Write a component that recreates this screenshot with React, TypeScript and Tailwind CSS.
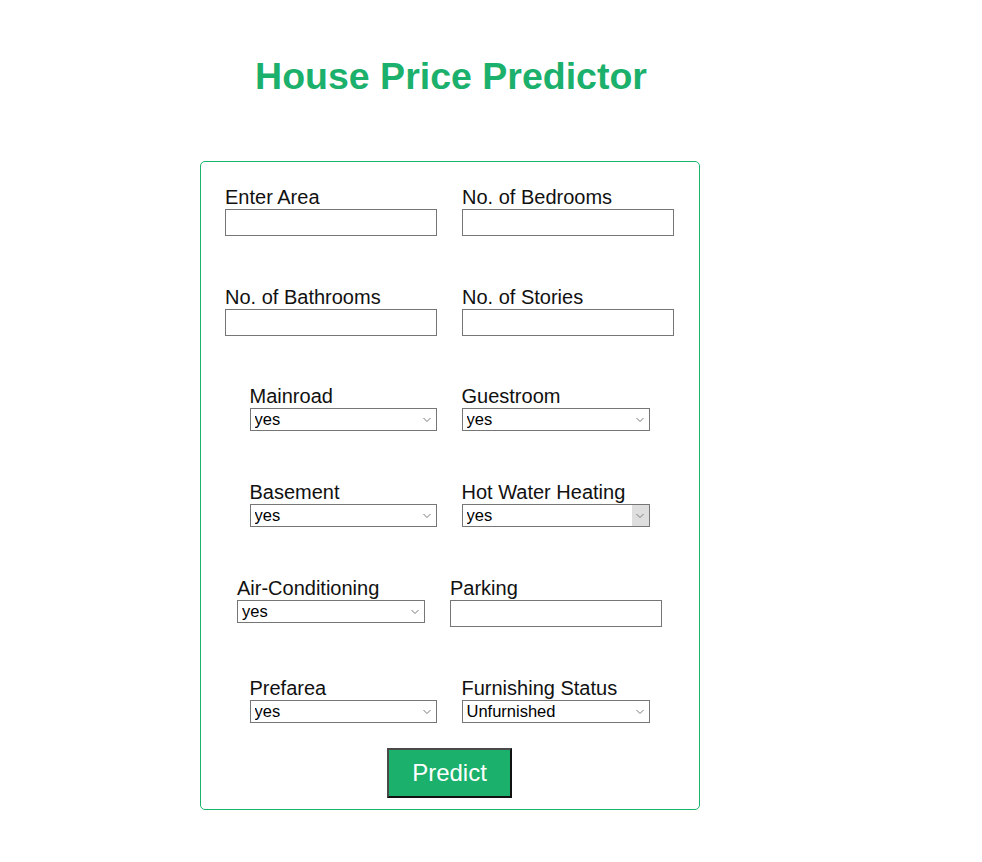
import React from 'react'

const Chevron = () => (
  <svg width="8" height="5" viewBox="0 0 8 5" className="absolute right-[6px] top-1/2 -translate-y-1/2 pointer-events-none">
    <path d="M0.5 0.5 L4 4 L7.5 0.5" fill="none" stroke="#7a7a7a" strokeWidth="1" />
  </svg>
)

const TextField = ({ label }: { label: string }) => (
  <div className="flex flex-col w-[212px]">
    <label className="text-[20px] leading-[23px] text-[#111]">{label}</label>
    <input type="text" className="h-[27px] w-[212px] border border-[#767676] bg-white outline-none" />
  </div>
)

const SelectField = ({
  label,
  options,
  width,
  hover,
}: {
  label: string
  options: string[]
  width: string
  hover?: boolean
}) => (
  <div className={`flex flex-col ${width}`}>
    <label className="text-[20px] leading-[23px] text-[#111]">{label}</label>
    <div className="relative h-[23px]">
      <select className="appearance-none h-[23px] w-full border border-[#767676] bg-white pl-[4px] text-[16.5px] leading-[21px] text-black outline-none">
        {options.map((o) => (
          <option key={o} value={o}>
            {o}
          </option>
        ))}
      </select>
      {hover && <div className="absolute right-px top-px bottom-px w-[17px] bg-[#dedede] pointer-events-none" />}
      <Chevron />
    </div>
  </div>
)

const yesNo = ['yes', 'no']

export default function App() {
  return (
    <div className="min-h-screen bg-white" style={{ fontFamily: '"Liberation Sans", Arial, sans-serif' }}>
      <div className="ml-[200px] w-[500px]">
        <h1 className="pt-[55px] pl-[2px] h-[97px] text-center text-[37.5px] leading-[42px] font-bold text-[#1bb06b]">
          House Price Predictor
        </h1>
        <form
          className="mt-[64px] rounded-[5px] border border-[#1ab36b] pt-[24px] pb-[11px] pr-[1px] flex flex-col"
          onSubmit={(e) => e.preventDefault()}
        >
          <div className="flex justify-center gap-[25px] mb-[50px]">
            <TextField label="Enter Area" />
            <TextField label="No. of Bedrooms" />
          </div>
          <div className="flex justify-center gap-[25px] mb-[49px]">
            <TextField label="No. of Bathrooms" />
            <TextField label="No. of Stories" />
          </div>
          <div className="flex justify-center gap-[25px] mb-[50px]">
            <SelectField label="Mainroad" options={yesNo} width="w-[187px]" />
            <SelectField label="Guestroom" options={yesNo} width="w-[188px]" />
          </div>
          <div className="flex justify-center gap-[25px] mb-[50px]">
            <SelectField label="Basement" options={yesNo} width="w-[187px]" />
            <SelectField label="Hot Water Heating" options={yesNo} width="w-[188px]" hover />
          </div>
          <div className="flex justify-center gap-[25px] mb-[50px]">
            <SelectField label="Air-Conditioning" options={yesNo} width="w-[188px]" />
            <TextField label="Parking" />
          </div>
          <div className="flex justify-center gap-[25px] mb-[25px]">
            <SelectField label="Prefarea" options={yesNo} width="w-[187px]" />
            <SelectField
              label="Furnishing Status"
              options={['Unfurnished', 'Semi-furnished', 'Furnished']}
              width="w-[188px]"
            />
          </div>
          <div className="flex justify-center">
            <button
              type="submit"
              className="h-[50px] w-[125px] border-2 border-t-[#4a4a4a] border-l-[#4a4a4a] border-b-[#111] border-r-[#111] bg-[#1bb06b] text-[24px] text-white"
            >
              Predict
            </button>
          </div>
        </form>
      </div>
    </div>
  )
}
